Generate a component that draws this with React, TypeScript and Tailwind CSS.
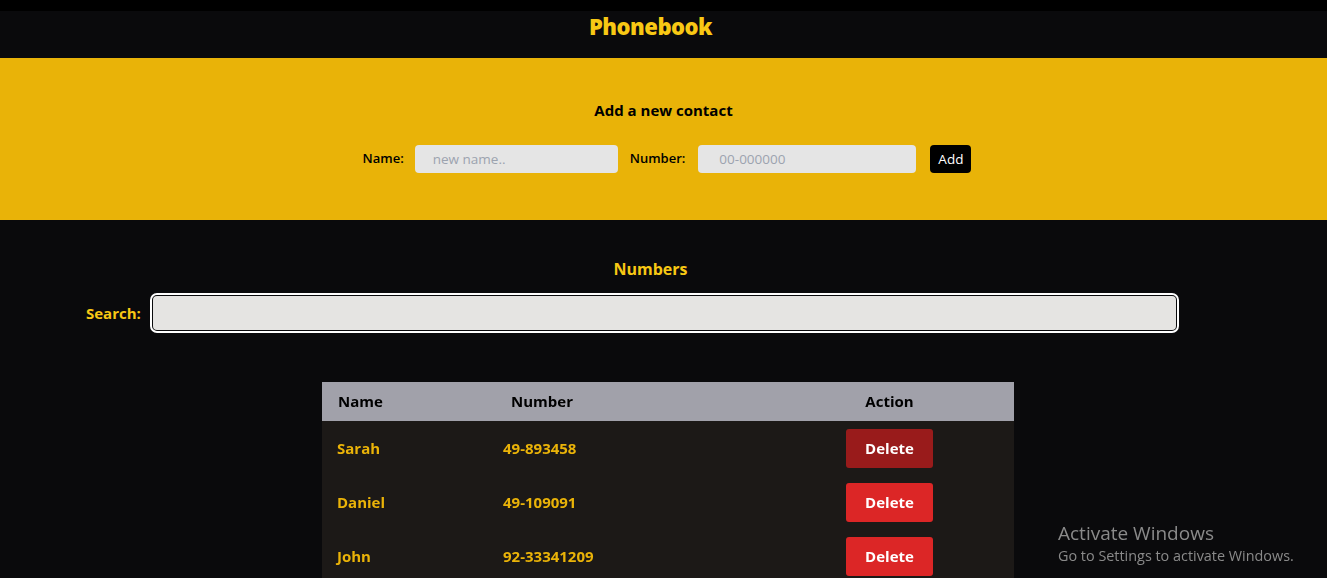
import { useState } from "react";

type Contact = { id: number; name: string; number: string };

const initial: Contact[] = [
  { id: 1, name: "Sarah", number: "49-893458" },
  { id: 2, name: "Daniel", number: "49-109091" },
  { id: 3, name: "John", number: "92-33341209" },
];

export default function App() {
  const [contacts, setContacts] = useState<Contact[]>(initial);
  const [query, setQuery] = useState("");

  const shown = contacts.filter((c) =>
    c.name.toLowerCase().includes(query.toLowerCase())
  );

  return (
    <main className="min-h-screen bg-[#0a0a0c] font-['Open_Sans',sans-serif]">
      <div className="h-[11px] bg-black" />

      <header className="h-[47px] flex justify-center pr-[26px]">
        <h1 className="text-[22px] font-extrabold text-[#f8c814] leading-[30px] tracking-[-0.5px]">
          Phonebook
        </h1>
      </header>

      <section className="h-[162px] bg-[#e9b308] flex flex-col items-center pt-[41px]">
        <h2 className="text-[15px] font-bold text-black leading-[22px]">Add a new contact</h2>

        <form className="flex items-center mt-[24px] ml-[7px]" onSubmit={(e) => e.preventDefault()}>
          <label className="text-[13px] font-semibold text-black mr-[11px]">Name:</label>
          <input
            type="text"
            placeholder="new name.."
            className="w-[203px] h-[28px] rounded-[4px] bg-[#e5e5e5] pl-[18px] text-[13.5px] text-gray-700 placeholder:text-[#9ca3af] outline-none"
          />
          <label className="text-[13px] font-semibold text-black ml-[12px] mr-[13px]">Number:</label>
          <input
            type="text"
            placeholder="00-000000"
            className="w-[218px] h-[28px] rounded-[4px] bg-[#e5e5e5] pl-[21px] text-[13.5px] text-gray-700 placeholder:text-[#9ca3af] outline-none"
          />
          <button
            type="submit"
            className="ml-[14px] h-[28px] px-[8px] rounded-[4px] bg-black text-white text-[13.5px]"
          >
            Add
          </button>
        </form>
      </section>

      <section className="pt-[37px]">
        <h2 className="text-center text-[16px] font-bold text-[#f8c814] leading-[24px] pr-[26px]">Numbers</h2>

        <div className="flex items-center mt-[15px] pl-[86px]">
          <label className="text-[15px] font-bold text-[#f8c814] mr-[12px]">Search:</label>
          <input
            autoFocus
            type="text"
            value={query}
            onChange={(e) => setQuery(e.target.value)}
            className="w-[1023px] h-[34px] rounded-[4px] bg-[#e5e4e2] px-[10px] text-[14px] text-black outline-2 outline-white outline-offset-1 caret-black"
          />
        </div>

        <table className="ml-[322px] mt-[52px] w-[692px] border-collapse text-[15px] font-bold">
          <thead>
            <tr className="h-[39px] bg-[#a1a1aa] text-black">
              <th className="w-[173px] pl-[16px] text-left font-bold">Name</th>
              <th className="w-[270px] pl-[16px] text-left font-bold">Number</th>
              <th className="w-[249px] text-center font-bold">Action</th>
            </tr>
          </thead>
          <tbody className="bg-[#1c1917] text-[#eab308]">
            {shown.map((c, i) => (
              <tr key={c.id} className="h-[54px]">
                <td className="pl-[15px]">{c.name}</td>
                <td className="pl-[8px]">{c.number}</td>
                <td className="text-center">
                  <button
                    onClick={() => setContacts(contacts.filter((x) => x.id !== c.id))}
                    className={`w-[87px] h-[39px] rounded-[3px] text-white text-[15px] font-bold ${
                      i === 0 ? "bg-[#991b1b]" : "bg-[#dc2626]"
                    }`}
                  >
                    Delete
                  </button>
                </td>
              </tr>
            ))}
          </tbody>
        </table>
      </section>

      <div className="fixed left-[1058px] top-[522px] text-[#8a8a8a] leading-tight pointer-events-none">
        <div className="text-[19px]">Activate Windows</div>
        <div className="text-[14.4px] mt-[1px]">Go to Settings to activate Windows.</div>
      </div>
    </main>
  );
}
